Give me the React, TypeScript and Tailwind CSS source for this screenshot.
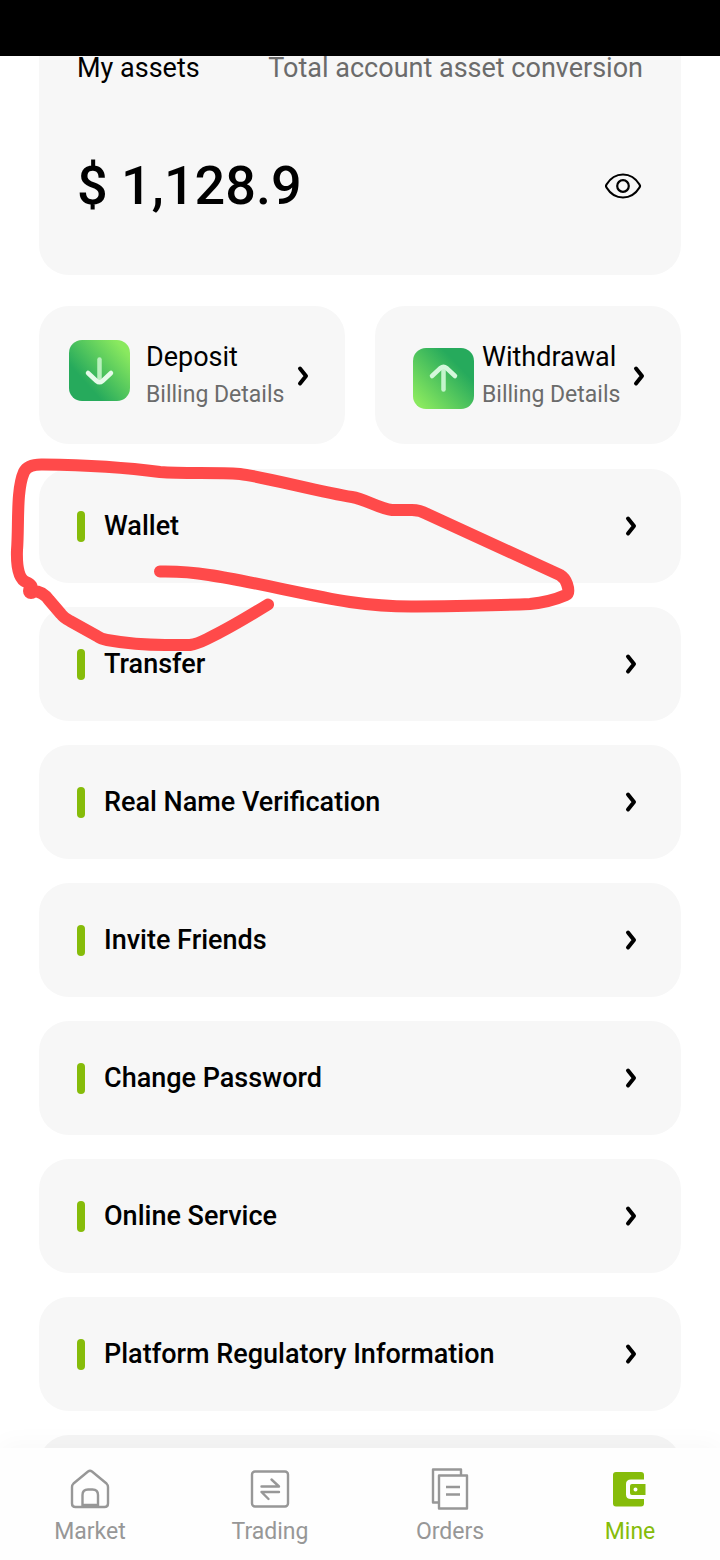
import React from 'react';

const Chevron: React.FC = () => (
  <svg width="12" height="22" viewBox="0 0 12 22" fill="none" stroke="#000" strokeWidth="4" strokeLinecap="round" strokeLinejoin="round" aria-hidden="true">
    <path d="M3 3.500L9 11L3 18.500" />
  </svg>
);

const DepositIcon: React.FC = () => (
  <svg width="61" height="61" viewBox="0 0 61 61" fill="none" aria-hidden="true">
    <defs>
      <linearGradient id="deposit" x1="16" y1="42" x2="54" y2="8" gradientUnits="userSpaceOnUse">
        <stop stopColor="#26aa5c" />
        <stop offset="1" stopColor="#8ae95f" />
      </linearGradient>
    </defs>
    <rect width="61" height="61" rx="13" fill="url(#deposit)" />
    <path d="M30.5 19.500V41" stroke="#b9f0bd" strokeWidth="4.500" strokeLinecap="round" />
    <path d="M19 33L27.500 41Q30.500 43.500 33.500 41L42 33" stroke="#e6faea" strokeWidth="4.500" strokeLinecap="round" />
  </svg>
);

const WithdrawalIcon: React.FC = () => (
  <svg width="61" height="61" viewBox="0 0 61 61" fill="none" aria-hidden="true">
    <defs>
      <linearGradient id="withdrawal" x1="46" y1="18" x2="6" y2="56" gradientUnits="userSpaceOnUse">
        <stop stopColor="#26aa5c" />
        <stop offset="1" stopColor="#8ae95f" />
      </linearGradient>
    </defs>
    <rect width="61" height="61" rx="13" fill="url(#withdrawal)" />
    <path d="M30.5 41.500V20" stroke="#c4f4cc" strokeWidth="4.500" strokeLinecap="round" />
    <path d="M19 28L27.500 20Q30.500 17.500 33.500 20L42 28" stroke="#d4f7dc" strokeWidth="4.500" strokeLinecap="round" />
  </svg>
);

const EyeIcon: React.FC = () => (
  <svg width="38" height="26" viewBox="0 0 38 26" fill="none" stroke="#000" strokeWidth="2.200" aria-hidden="true">
    <path d="M1.500 11.500C5.500 5 11 1.500 18 1.500S30.500 5 34.500 11.500Q35.500 13 34.500 14.500C30.500 21 25 24.500 18 24.500S5.500 21 1.500 14.500Q0.500 13 1.500 11.500Z" strokeLinejoin="round" />
    <circle cx="18" cy="13" r="5.800" />
  </svg>
);

const MarketIcon: React.FC = () => (
  <svg width="44" height="44" viewBox="0 0 44 44" fill="none" stroke="currentColor" strokeWidth="2.400" strokeLinejoin="round" aria-hidden="true">
    <path d="M20 3.500Q22 2 24 3.500L38.500 15.500Q40 17 40 19V35.500Q40 39 36.500 39H7.500Q4 39 4 35.500V19Q4 17 5.500 15.500Z" />
    <path d="M14.500 38V27Q14.500 21.500 20 21.500H24.500Q30 21.500 30 27V38Q30 37 28 37H16.500Q14.500 37 14.500 38Z" />
  </svg>
);

const TradingIcon: React.FC = () => (
  <svg width="44" height="44" viewBox="0 0 44 44" fill="none" stroke="currentColor" strokeWidth="2.400" strokeLinecap="round" strokeLinejoin="round" aria-hidden="true">
    <rect x="4" y="3.500" width="36" height="35" rx="3" />
    <path d="M13.500 18.500H31L23.500 11.500M31 24H13.500L20.500 31" />
  </svg>
);

const OrdersIcon: React.FC = () => (
  <svg width="44" height="44" viewBox="0 0 44 44" fill="none" stroke="currentColor" strokeWidth="2.400" strokeLinejoin="round" aria-hidden="true">
    <path d="M10.500 34.500H5V1.500H33V7" />
    <rect x="11" y="7.500" width="28" height="33" />
    <path d="M18 19H32M18 26.500H32" strokeWidth="2.600" />
  </svg>
);

const MineIcon: React.FC = () => (
  <svg width="44" height="44" viewBox="0 0 44 44" fill="currentColor" aria-hidden="true">
    <path d="M8 4H33Q36 4 36 7V11.500H23Q18 11.500 18 16V26.500Q18 31 23 31H36V35.500Q36 38.500 33 38.500H8Q5 38.500 5 35.500V7Q5 4 8 4Z" />
    <path d="M24 16H37.500V27H24Q22 27 22 25V18Q22 16 24 16ZM27.500 19.500A2 2 0 1 0 27.500 23.500A2 2 0 1 0 27.500 19.500Z" fillRule="evenodd" />
  </svg>
);

const App: React.FC = () => {
  const actions = [
    { icon: <DepositIcon />, title: 'Deposit', slot: 'items-start justify-start' },
    { icon: <WithdrawalIcon />, title: 'Withdrawal', slot: 'items-end justify-end' },
  ];

  const menu = [
    'Wallet',
    'Transfer',
    'Real Name Verification',
    'Invite Friends',
    'Change Password',
    'Online Service',
    'Platform Regulatory Information',
  ];

  const tabs = [
    { icon: <MarketIcon />, label: 'Market' },
    { icon: <TradingIcon />, label: 'Trading' },
    { icon: <OrdersIcon />, label: 'Orders' },
    { icon: <MineIcon />, label: 'Mine', active: true },
  ];

  return (
    <div className="relative flex h-screen flex-col overflow-hidden bg-white font-['Roboto',sans-serif] text-black">
      <header className="h-14 shrink-0 bg-black" />

      <main className="min-h-0 flex-1 overflow-hidden px-[39px]">
        <section className="rounded-b-[30px] bg-[#f7f7f7] px-[38px] pb-14">
          <div className="flex items-center justify-between text-[27px] leading-6">
            <h1>My assets</h1>
            <p className="text-[#6b6b6b]">Total account asset conversion</p>
          </div>
          <div className="flex items-center justify-between pt-[73px]">
            <p className="text-[54px] leading-[66px] font-medium">$ 1,128.9</p>
            <button type="button" aria-label="Hide balance">
              <EyeIcon />
            </button>
          </div>
        </section>

        <section className="mt-[31px] grid grid-cols-2 gap-[30px]">
          {actions.map((action) => (
            <button
              key={action.title}
              type="button"
              className="flex items-center rounded-[30px] bg-[#f7f7f7] pt-8 pr-9 pb-[30px] pl-[30px] text-left"
            >
              <span className={`flex h-[73px] w-[69px] shrink-0 pb-1 ${action.slot}`}>{action.icon}</span>
              <span className="ml-2 flex-1 whitespace-nowrap">
                <span className="block text-[27px] leading-[38px]">{action.title}</span>
                <span className="block text-[23px] leading-[38px] text-[#6b6b6b]">Billing Details</span>
              </span>
              <Chevron />
            </button>
          ))}
        </section>

        <nav className="mt-[25px] flex flex-col gap-6" aria-label="Account">
          {menu.map((item) => (
            <a key={item} href="#" className="flex h-[114px] shrink-0 items-center rounded-[30px] bg-[#f7f7f7] pr-11 pl-[38px]">
              <span className="h-[31px] w-2 rounded-full bg-[#86bc0a]" />
              <span className="ml-[19px] flex-1 text-[27px] leading-9 font-medium">{item}</span>
              <Chevron />
            </a>
          ))}
          <div className="h-[114px] shrink-0 rounded-[30px] bg-[#f5f5f5]" />
        </nav>
      </main>

      <nav className="z-10 grid shrink-0 grid-cols-4 bg-[#fefefe] pt-5 pb-3 shadow-[0_-4px_24px_rgba(0,0,0,0.03)]" aria-label="Main">
        {tabs.map((tab) => (
          <a key={tab.label} href="#" className={`flex flex-col items-center ${tab.active ? 'text-[#86bc0a]' : 'text-[#979797]'}`}>
            {tab.icon}
            <span className="mt-1 text-[23px] leading-8">{tab.label}</span>
          </a>
        ))}
      </nav>

      {/* hand-drawn marker around Wallet */}
      <svg
        className="pointer-events-none absolute top-0 left-0 z-20"
        width="720"
        height="700"
        viewBox="0 0 720 700"
        fill="none"
        stroke="#ff4a4a"
        strokeWidth="12"
        strokeLinecap="round"
        strokeLinejoin="round"
        aria-hidden="true"
      >
        <path d="M160 571.500Q185 571 209 575C250 581 310 596 350 602Q385 607 417 606.500C455 606 505 605 530 604Q550 602 566 595Q570 593 567 584Q565 578 560 575L427 514Q420 510 412 510H392C380 509 365 499 352 497C320 492 265 477 240 474C215 472 185 474 160 472C130 468 80 465 43 464.500Q28 464 24 472C16 490 19 525 17 550Q16 578 26 582Q34 585 31 591Q42 590 49 600L61 614Q64 618 70 621L97 636Q101 639 107 640Q135 645 165 645H190Q197 644 207 639Q230 628 268 604.500" />
        <circle cx="31" cy="591" r="2" />
      </svg>
    </div>
  );
};

export default App;
